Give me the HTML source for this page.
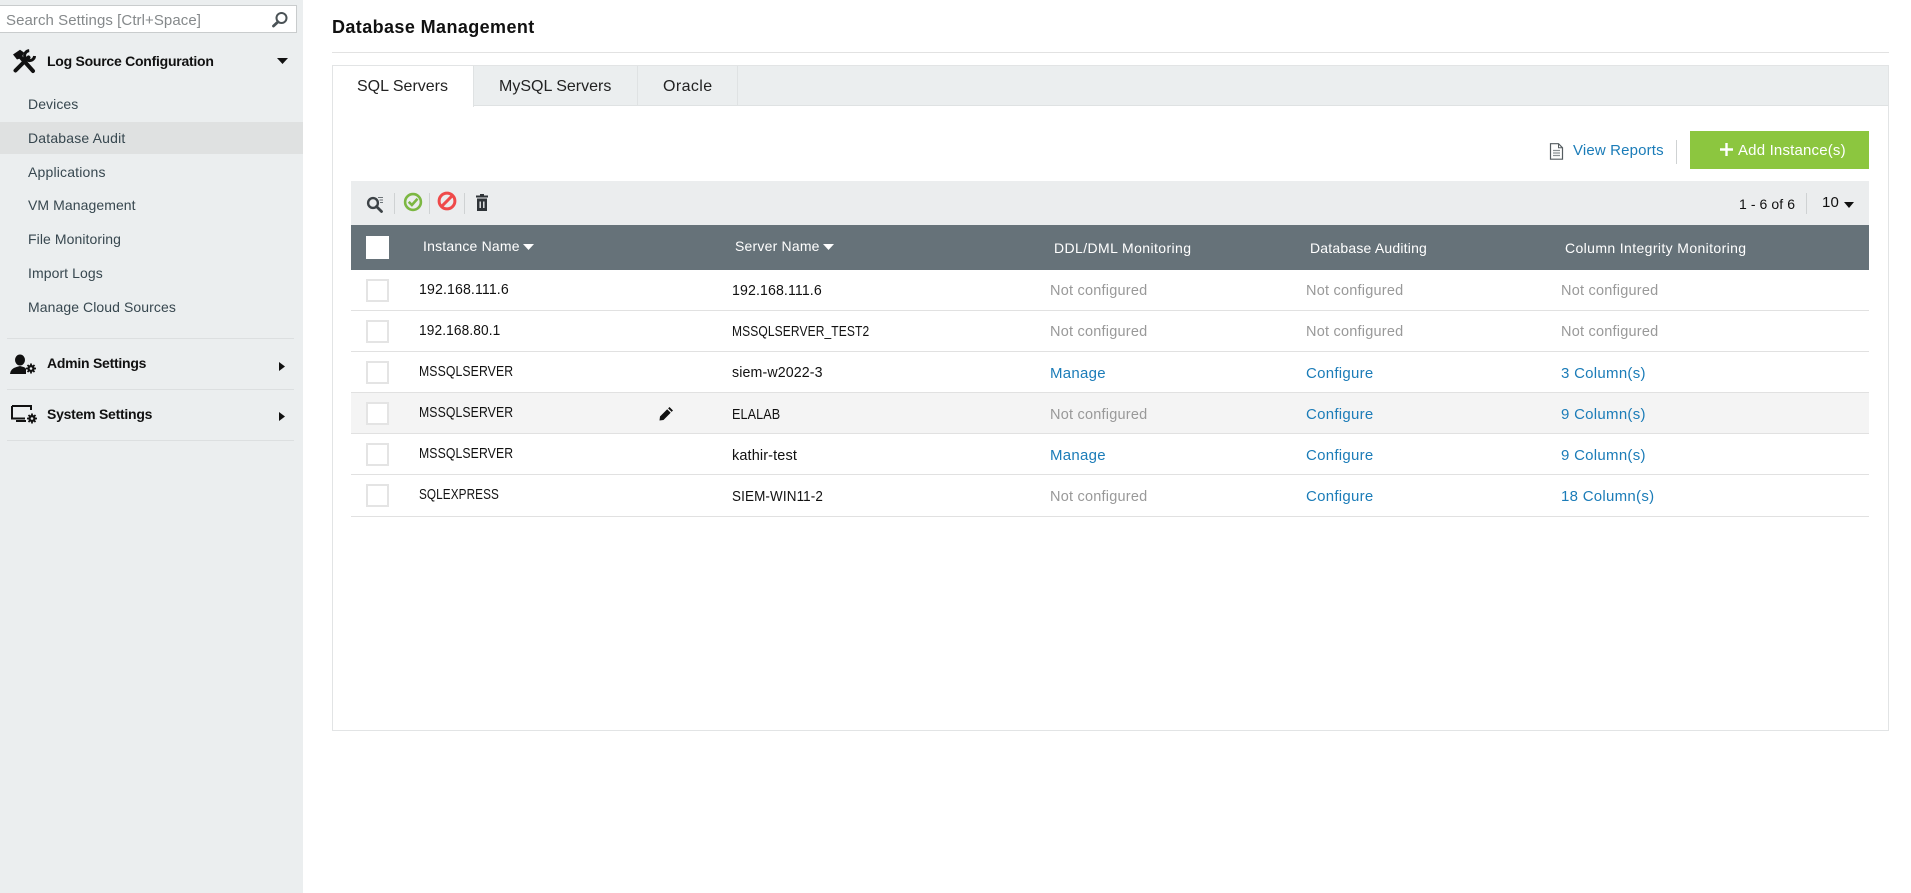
<!DOCTYPE html>
<html lang="en">
<head>
<meta charset="utf-8">
<title>Database Management</title>
<style>
html,body{margin:0;padding:0;background:#fff}
body{position:relative;width:1911px;height:893px;overflow:hidden;font-family:"Liberation Sans",Arial,sans-serif;font-size:14.5px;color:#111}
.t{position:absolute;white-space:nowrap;height:20px;line-height:20px;letter-spacing:.12px;transform-origin:0 50%}
.b{position:absolute}
svg{position:absolute;display:block}
#side{position:absolute;left:0;top:0;width:303px;height:893px;background:#ebeeef}
#search{position:absolute;left:-2px;top:5px;width:297px;height:26px;background:#fff;border:1px solid #c9cccd}
.nav{color:#37474f;font-size:14px;letter-spacing:.08px}
.sec{font-weight:bold;font-size:14px;color:#111;letter-spacing:-.25px}
.hr{position:absolute;left:7px;width:287px;height:1px;background:#dcdfe0}
.tabt{font-size:16px;color:#222;letter-spacing:0}
.hd{color:#fff;font-size:14px;letter-spacing:.2px}
.row{position:absolute;left:351px;width:1518px;height:1px;background:#e1e1e1}
.cb{position:absolute;left:366px;width:19px;height:19px;border:2px solid #e4e4e4;background:#fff}
.n{color:#999;letter-spacing:.22px}
.l{color:#1b7cb8;font-size:15px;letter-spacing:.28px}
.sep{position:absolute;width:1px;background:#cfd2d3}
</style>
</head>
<body>

<aside id="side">
  <div id="search"></div>
  <span class="t" style="left:6px;top:11px;color:#85898b;font-size:15px;letter-spacing:.07px">Search Settings [Ctrl+Space]</span>
  <svg style="left:271px;top:11px" width="18" height="17" viewBox="0 0 18 17"><circle cx="10.5" cy="7" r="5" fill="none" stroke="#4a5256" stroke-width="2"/><path d="M7 10.8L2.5 15" stroke="#4a5256" stroke-width="2.8" stroke-linecap="round"/></svg>

  <svg style="left:12px;top:49px" width="24" height="25" viewBox="0 0 24 25"><path d="M1 5.5L8 .7L12 3.5L9.5 9L5 10.5Z" fill="#111"/><path d="M8.5 8L21 22" stroke="#111" stroke-width="4" stroke-linecap="round"/><path d="M16.5 8.5L3.5 21.5" stroke="#111" stroke-width="4" stroke-linecap="round"/><path d="M17.2 1.6A5 5 0 1 0 22.6 7" fill="none" stroke="#111" stroke-width="3"/></svg>
  <span class="t sec" style="left:47px;top:51px">Log Source Configuration</span>
  <svg style="left:277px;top:58px" width="11" height="6" viewBox="0 0 11 6"><path d="M0 0H11L5.5 6Z" fill="#111"/></svg>

  <div class="b" style="left:0;top:122px;width:303px;height:32px;background:#dfe1e1"></div>
  <span class="t nav" style="left:28px;top:94px">Devices</span>
  <span class="t nav" style="left:28px;top:128px;letter-spacing:.18px">Database Audit</span>
  <span class="t nav" style="left:28px;top:162px;letter-spacing:.18px">Applications</span>
  <span class="t nav" style="left:28px;top:195px">VM Management</span>
  <span class="t nav" style="left:28px;top:229px">File Monitoring</span>
  <span class="t nav" style="left:28px;top:263px">Import Logs</span>
  <span class="t nav" style="left:28px;top:297px">Manage Cloud Sources</span>

  <div class="hr" style="top:338px"></div>
  <svg style="left:10px;top:354px" width="27" height="21" viewBox="0 0 27 21"><ellipse cx="10" cy="6" rx="5" ry="5.5" fill="#111"/><path d="M0 20Q.5 14.5 6.5 13L10 12L13.5 13Q15.5 13.5 16 15V20Z" fill="#111"/><path d="M21 9.5V19.5M16 14.5H26M17.5 11L24.5 18M24.5 11L17.5 18" stroke="#111" stroke-width="1.8"/><circle cx="21" cy="14.5" r="3.6" fill="#111"/><circle cx="21" cy="14.5" r="1.3" fill="#ebeeef"/></svg>
  <span class="t sec" style="left:47px;top:353px">Admin Settings</span>
  <svg style="left:279px;top:362px" width="6" height="9" viewBox="0 0 6 9"><path d="M0 0L6 4.5L0 9Z" fill="#111"/></svg>

  <div class="hr" style="top:389px"></div>
  <svg style="left:11px;top:405px" width="27" height="20" viewBox="0 0 27 20"><path d="M1 1H20V5M1 1V13.5H14" fill="none" stroke="#111" stroke-width="2"/><path d="M5 15H15V17H5Z" fill="#111"/><path d="M21 8.5V18.5M16 13.5H26M17.5 10L24.5 17M24.5 10L17.5 17" stroke="#111" stroke-width="1.8"/><circle cx="21" cy="13.5" r="3.6" fill="#111"/><circle cx="21" cy="13.5" r="1.3" fill="#ebeeef"/></svg>
  <span class="t sec" style="left:47px;top:404px">System Settings</span>
  <svg style="left:279px;top:412px" width="6" height="9" viewBox="0 0 6 9"><path d="M0 0L6 4.5L0 9Z" fill="#111"/></svg>
  <div class="hr" style="top:440px"></div>
</aside>

<main>
  <span class="t" style="left:332px;top:17px;font-size:18px;font-weight:bold;letter-spacing:.4px">Database Management</span>
  <div class="b" style="left:332px;top:52px;width:1557px;height:1px;background:#e2e2e2"></div>

  <div class="b" style="left:332px;top:65px;width:1555px;height:664px;border:1px solid #e2e4e5;background:#fff"></div>
  <div class="b" style="left:333px;top:66px;width:1555px;height:39px;background:#ebeeef;border-bottom:1px solid #dfe2e3"></div>
  <div class="b" style="left:333px;top:66px;width:140px;height:41px;background:#fff;border-right:1px solid #dfe2e3"></div>
  <div class="b" style="left:637px;top:66px;width:1px;height:39px;background:#dfe2e3"></div>
  <div class="b" style="left:737px;top:66px;width:1px;height:39px;background:#dfe2e3"></div>
  <span class="t tabt" style="left:357px;top:77px">SQL Servers</span>
  <span class="t tabt" style="left:499px;top:77px">MySQL Servers</span>
  <span class="t tabt" style="left:663px;top:77px;letter-spacing:.4px">Oracle</span>

  <svg style="left:1549px;top:143px" width="15" height="17" viewBox="0 0 15 17"><path d="M1.5 .7H9.5L13.5 4.7V16.2H1.5Z" fill="#fff" stroke="#555c60" stroke-width="1.2"/><path d="M9.5 .7V4.7H13.5" fill="none" stroke="#555c60" stroke-width="1"/><path d="M4 7.5H11M4 10H11M4 12.5H11" stroke="#8b9194" stroke-width="1.2"/></svg>
  <span class="t l" style="left:1573px;top:141px;letter-spacing:.15px">View Reports</span>
  <div class="sep" style="left:1676px;top:140px;height:24px"></div>
  <div class="b" style="left:1690px;top:131px;width:179px;height:38px;background:#8cc63f"></div>
  <svg style="left:1720px;top:143px" width="13" height="13" viewBox="0 0 13 13"><path d="M6.5 0V13M0 6.5H13" stroke="#fff" stroke-width="2.4"/></svg>
  <span class="t" style="left:1738px;top:141px;color:#fff;font-size:15px;letter-spacing:.18px">Add Instance(s)</span>

  <div class="b" style="left:351px;top:181px;width:1518px;height:44px;background:#ebedee"></div>
  <svg style="left:366px;top:195px" width="18" height="18" viewBox="0 0 18 18"><circle cx="7" cy="8" r="4.9" fill="none" stroke="#3d4347" stroke-width="2.4"/><path d="M10.5 11.5L15.5 16.5" stroke="#3d4347" stroke-width="2.8" stroke-linecap="round"/><path d="M12 2.5H17M13.5 5H17M14 7.5H17" stroke="#6d7478" stroke-width="1"/></svg>
  <div class="sep" style="left:394px;top:193px;height:21px"></div>
  <svg style="left:403px;top:192px" width="20" height="20" viewBox="0 0 20 20"><circle cx="10" cy="10" r="7.9" fill="none" stroke="#7cb742" stroke-width="2.6"/><path d="M5.7 9.8L8.9 13L14.5 6.7" fill="none" stroke="#7cb742" stroke-width="2.6"/></svg>
  <div class="sep" style="left:429px;top:193px;height:21px"></div>
  <svg style="left:437px;top:191px" width="20" height="20" viewBox="0 0 20 20"><circle cx="10" cy="10" r="7.9" fill="none" stroke="#ef4a4a" stroke-width="3"/><path d="M4.6 15.4L15.4 4.6" stroke="#ef4a4a" stroke-width="3"/></svg>
  <div class="sep" style="left:464px;top:193px;height:21px"></div>
  <svg style="left:476px;top:194px" width="12" height="17" viewBox="0 0 12 17"><path d="M4 0H8V1.5H12V3.5H0V1.5H4Z" fill="#2f3438"/><path d="M1 4.5H11V17H1Z" fill="#2f3438"/><path d="M4.2 7.5V14M7.8 7.5V14" stroke="#ebedee" stroke-width="1.4"/></svg>
  <span class="t" style="left:1739px;top:194px;font-size:14px;letter-spacing:.08px">1 - 6 of 6</span>
  <div class="sep" style="left:1806px;top:193px;height:21px"></div>
  <span class="t" style="left:1822px;top:193px;font-size:15px">10</span>
  <svg style="left:1844px;top:202px" width="10" height="6" viewBox="0 0 10 6"><path d="M0 0H10L5 6Z" fill="#111"/></svg>

  <div class="b" style="left:351px;top:225px;width:1518px;height:45px;background:#667279"></div>
  <div class="b" style="left:366px;top:236px;width:23px;height:23px;background:#fff"></div>
  <span class="t hd" style="left:423px;top:236px">Instance Name</span>
  <svg style="left:523px;top:244px" width="11" height="6" viewBox="0 0 11 6"><path d="M0 0H11L5.5 6Z" fill="#fff"/></svg>
  <span class="t hd" style="left:735px;top:236px">Server Name</span>
  <svg style="left:823px;top:244px" width="11" height="6" viewBox="0 0 11 6"><path d="M0 0H11L5.5 6Z" fill="#fff"/></svg>
  <span class="t hd" style="left:1054px;top:238px;letter-spacing:.4px">DDL/DML Monitoring</span>
  <span class="t hd" style="left:1310px;top:238px">Database Auditing</span>
  <span class="t hd" style="left:1565px;top:238px;letter-spacing:.38px">Column Integrity Monitoring</span>

  <div class="b" style="left:351px;top:393px;width:1518px;height:40px;background:#f4f4f4"></div>
  <div class="row" style="top:310px"></div>
  <div class="row" style="top:351px"></div>
  <div class="row" style="top:392px"></div>
  <div class="row" style="top:433px"></div>
  <div class="row" style="top:474px"></div>
  <div class="row" style="top:516px"></div>

  <div class="cb" style="top:279px"></div>
  <span class="t" style="left:419px;top:280px;transform:scaleX(.975)">192.168.111.6</span>
  <span class="t" style="left:732px;top:281px;transform:scaleX(.975)">192.168.111.6</span>
  <span class="t n" style="left:1050px;top:281px">Not configured</span>
  <span class="t n" style="left:1306px;top:281px">Not configured</span>
  <span class="t n" style="left:1561px;top:281px">Not configured</span>

  <div class="cb" style="top:320px"></div>
  <span class="t" style="left:419px;top:321px;transform:scaleX(.945)">192.168.80.1</span>
  <span class="t" style="left:732px;top:322px;transform:scaleX(.83)">MSSQLSERVER_TEST2</span>
  <span class="t n" style="left:1050px;top:322px">Not configured</span>
  <span class="t n" style="left:1306px;top:322px">Not configured</span>
  <span class="t n" style="left:1561px;top:322px">Not configured</span>

  <div class="cb" style="top:361px"></div>
  <span class="t" style="left:419px;top:362px;transform:scaleX(.845)">MSSQLSERVER</span>
  <span class="t" style="left:732px;top:363px;transform:scaleX(.98)">siem-w2022-3</span>
  <span class="t l" style="left:1050px;top:364px">Manage</span>
  <span class="t l" style="left:1306px;top:364px">Configure</span>
  <span class="t l" style="left:1561px;top:364px">3 Column(s)</span>

  <div class="cb" style="top:402px"></div>
  <span class="t" style="left:419px;top:403px;transform:scaleX(.845)">MSSQLSERVER</span>
  <svg style="left:659px;top:406px" width="15" height="15" viewBox="0 0 15 15"><path d="M10.5 1L14 4.5L12.6 5.9L9.1 2.4ZM8.2 3.3L11.7 6.8L4.5 14L0.5 14.5L1 10.5Z" fill="#111"/></svg>
  <span class="t" style="left:732px;top:405px;transform:scaleX(.87)">ELALAB</span>
  <span class="t n" style="left:1050px;top:405px">Not configured</span>
  <span class="t l" style="left:1306px;top:405px">Configure</span>
  <span class="t l" style="left:1561px;top:405px">9 Column(s)</span>

  <div class="cb" style="top:443px"></div>
  <span class="t" style="left:419px;top:444px;transform:scaleX(.845)">MSSQLSERVER</span>
  <span class="t" style="left:732px;top:446px">kathir-test</span>
  <span class="t l" style="left:1050px;top:446px">Manage</span>
  <span class="t l" style="left:1306px;top:446px">Configure</span>
  <span class="t l" style="left:1561px;top:446px">9 Column(s)</span>

  <div class="cb" style="top:484px"></div>
  <span class="t" style="left:419px;top:485px;transform:scaleX(.81)">SQLEXPRESS</span>
  <span class="t" style="left:732px;top:487px;transform:scaleX(.93)">SIEM-WIN11-2</span>
  <span class="t n" style="left:1050px;top:487px">Not configured</span>
  <span class="t l" style="left:1306px;top:487px">Configure</span>
  <span class="t l" style="left:1561px;top:487px">18 Column(s)</span>
</main>

</body>
</html>
